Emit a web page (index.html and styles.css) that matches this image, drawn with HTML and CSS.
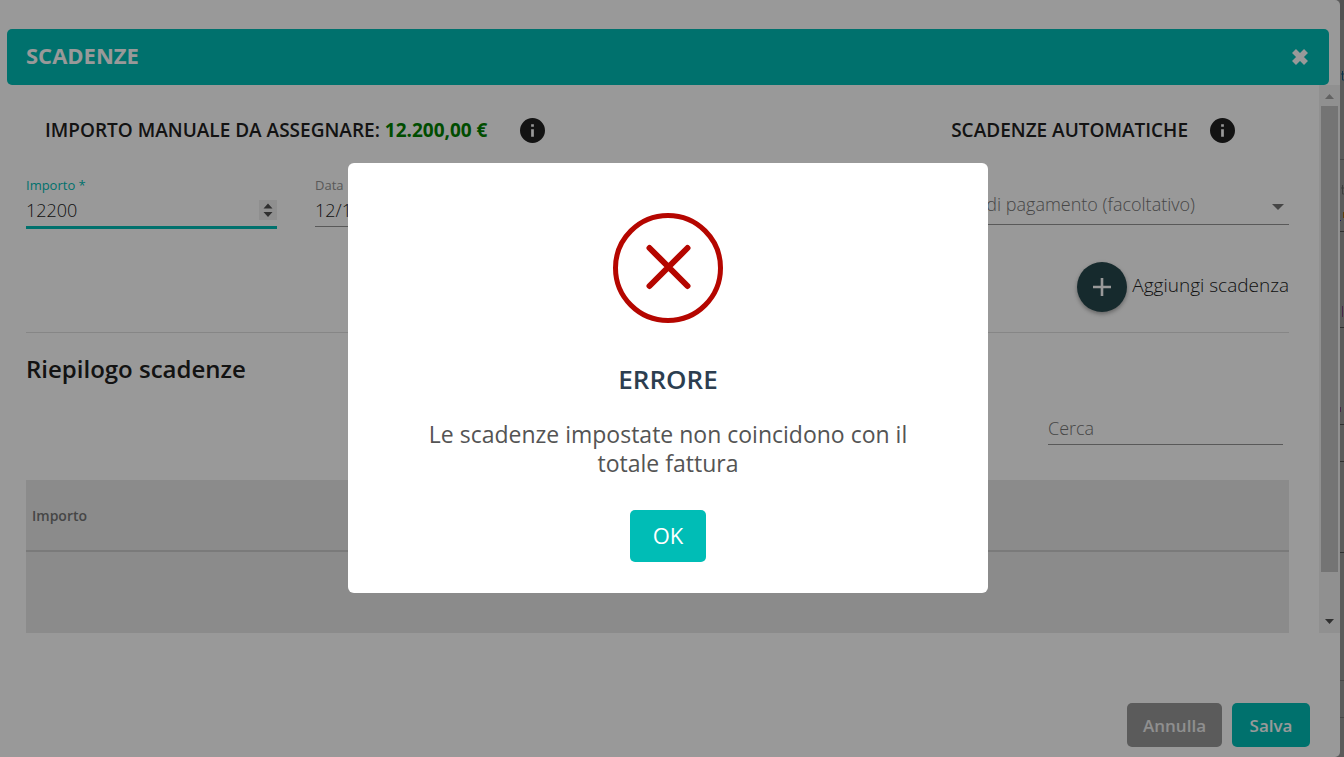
FILE: index.html
```html
<!DOCTYPE html>
<html lang="it">
<head>
<meta charset="utf-8">
<title>Scadenze</title>
<link rel="stylesheet" href="styles.css">
</head>
<body>
<div class="page">
  <main class="dialog">
    <header class="dialog-header">
      <h1 class="dialog-title">SCADENZE</h1>
      <button class="close" type="button" aria-label="Chiudi">
        <svg width="18" height="18" viewBox="0 0 18 18"><path d="M3 3l12 12M15 3L3 15" stroke="currentColor" stroke-width="5.600"/></svg>
      </button>
    </header>
    <div class="scroller">
      <div class="content">
        <div class="headline">
          <h2 class="subtitle manual">IMPORTO MANUALE DA ASSEGNARE: <span class="amount">12.200,00 €</span></h2>
          <svg class="info" viewBox="0 0 24 24"><path fill="currentColor" d="M12 0a12 12 0 100 24 12 12 0 000-24zm1.3 18h-2.6v-7.3h2.6zm0-9.5h-2.6V6h2.6z"/></svg>
          <h2 class="subtitle auto">SCADENZE AUTOMATICHE</h2>
          <svg class="info" viewBox="0 0 24 24"><path fill="currentColor" d="M12 0a12 12 0 100 24 12 12 0 000-24zm1.3 18h-2.6v-7.3h2.6zm0-9.5h-2.6V6h2.6z"/></svg>
        </div>
        <div class="fields">
          <div class="field focused">
            <label for="importo">Importo *</label>
            <div class="control">
              <input id="importo" type="number" value="12200">
              <svg class="spinner" width="18" height="20" viewBox="0 0 18 20"><path fill="#505050" d="M4.500 8.500L9 3.500l4.500 5zM4.500 12L9 17l4.500-5z"/></svg>
            </div>
          </div>
          <div class="field">
            <label for="data">Data</label>
            <div class="control"><input id="data" type="text" value="12/1"></div>
          </div>
          <div class="field select-field">
            <select id="pagamento" aria-label="Pagamento"><option>di pagamento (facoltativo)</option></select>
            <svg class="caret" width="12" height="6" viewBox="0 0 12 6"><path fill="#757575" d="M0 0h12L6 6z"/></svg>
          </div>
        </div>
        <div class="add-row">
          <button class="fab" id="add" type="button" aria-label="Aggiungi">
            <svg width="18" height="18" viewBox="0 0 18 18"><path d="M9 0v18M0 9h18" stroke="currentColor" stroke-width="2.600"/></svg>
          </button>
          <label for="add">Aggiungi scadenza</label>
        </div>
        <h2 class="summary-title">Riepilogo scadenze</h2>
        <input class="search" type="text" placeholder="Cerca" aria-label="Cerca">
        <table class="summary">
          <thead><tr><th scope="col">Importo</th></tr></thead>
          <tbody><tr><td></td></tr></tbody>
        </table>
      </div>
      <div class="scrollbar">
        <svg width="9" height="5" viewBox="0 0 9 5"><path fill="#a3a3a3" d="M0 5h9L4.500 0z"/></svg>
        <div class="thumb"></div>
        <svg width="9" height="5" viewBox="0 0 9 5"><path fill="#505050" d="M0 0h9L4.500 5z"/></svg>
      </div>
    </div>
    <footer class="actions">
      <button class="btn cancel" type="button">Annulla</button>
      <button class="btn save" type="button">Salva</button>
    </footer>
  </main>
  <svg class="behind" viewBox="0 0 4 757" preserveAspectRatio="none">
    <path fill="#888" d="M0 0h4v20H0z"/>
    <path fill="#777" d="M0 159h4v1H0zM0 680h4v1H0zM0 717h4v1H0z"/>
    <path fill="#505050" d="M0 231h4v1H0zM0 327h4v1H0zM0 424h4v1H0zM0 461h4v1H0zM0 552h4v1H0z"/>
    <path fill="none" stroke="#17567c" d="M2.500 71v9h1.500M1 74h3"/>
    <path fill="none" stroke="#666" d="M2.500 185v9h1.500M1 188h3"/>
    <path fill="#9a6610" d="M3 212h1v6H3z"/>
    <path fill="#252593" d="M0 220h1v1H0z"/>
    <path fill="#784378" d="M2 306h1v11H2zM0 407h1v5H0z"/>
  </svg>
</div>
<div class="overlay">
  <section class="alert" role="alertdialog" aria-labelledby="alert-title" aria-describedby="alert-text">
    <svg class="alert-icon" viewBox="0 0 110 110"><circle cx="55" cy="55" r="52.500"/><path d="M36.500 35l38 38M74.500 35l-38 38" stroke-linecap="round"/></svg>
    <h2 class="alert-title" id="alert-title">ERRORE</h2>
    <p class="alert-text" id="alert-text">Le scadenze impostate non coincidono con il totale fattura</p>
    <button class="btn ok" type="button">OK</button>
  </section>
</div>
</body>
</html>
```
FILE: styles.css
```css
* { box-sizing: border-box; }
body {
  margin: 0;
  background: #989898;
  color: #212121;
  font-family: "Open Sans", "Noto Sans", sans-serif;
  font-size: 19px;
  font-weight: 300;
}
h1, h2, p { margin: 0; }
button, input, select { font: inherit; color: inherit; }
button { border: 0; padding: 0; cursor: pointer; }
input, select { border: 0; padding: 0; background: transparent; outline: 0; min-width: 0; font-size: 18px; }

.page { display: flex; min-height: 100vh; padding-bottom: 1px; }
.dialog {
  flex: 1;
  min-width: 0;
  padding-top: 29px;
  background: #fff;
  border-radius: 0 5px 5px 0;
}
.behind { width: 4px; }

.dialog-header {
  display: flex;
  justify-content: space-between;
  align-items: center;
  height: 56px;
  margin: 0 11px 0 7px;
  padding: 0 20px 0 19px;
  background: #00bdb6;
  border-radius: 5px;
  color: #fff;
}
.dialog-title { font-size: 22px; font-weight: 700; line-height: 30px; padding-bottom: 4px; }
.close { display: flex; background: transparent; }

.scroller { display: flex; height: 548px; }
.content { flex: 1; min-width: 0; padding: 0 30px 0 26px; }
.headline {
  display: flex;
  align-items: center;
  gap: 22px;
  height: 90px;
  padding: 0 54px 0 19px;
}
.subtitle { font-size: 19px; font-weight: 600; line-height: 26px; white-space: nowrap; }
.manual { margin-right: 11px; }
.amount { color: #008000; font-weight: 700; }
.auto { margin-left: auto; }
.info { width: 25px; height: 25px; flex: none; }

.fields { display: flex; gap: 38px; height: 54px; }
.field { width: 251px; border-bottom: 1px solid #949494; height: 52px; }
.field label { display: block; color: #949494; font-size: 13px; font-weight: 400; line-height: 20px; }
.control { display: flex; align-items: center; height: 30px; }
.control input { flex: 1; line-height: 24px; }
.field.focused { border-bottom: 3px solid #00bdb6; height: 54px; }
.field.focused label { color: #00bdb6; }
input[type="number"] { appearance: textfield; -moz-appearance: textfield; }
input[type="number"]::-webkit-inner-spin-button { appearance: none; margin: 0; }
.spinner { background: #efefef; }
.select-field {
  display: flex;
  align-items: center;
  flex: 1;
  margin-left: 100px;
  padding: 8px 5px 0 0;
  height: 50px;
}
.select-field select {
  flex: 1;
  height: 30px;
  padding-right: 77px;
  appearance: none;
  color: #757575;
  text-align-last: right;
}
.caret { margin-top: 6px; }

.add-row {
  display: flex;
  justify-content: flex-end;
  align-items: center;
  gap: 5px;
  height: 104px;
  padding-top: 12px;
  border-bottom: 1px solid #e0e0e0;
}
.fab {
  display: grid;
  place-items: center;
  width: 50px;
  height: 50px;
  border-radius: 50%;
  background: #26474c;
  color: #fff;
  box-shadow: 0 2px 4px rgba(0, 0, 0, .35);
}
.add-row label { padding-bottom: 3px; }

.summary-title { padding-top: 20px; font-size: 24px; font-weight: 600; line-height: 32px; }
.search {
  display: block;
  width: 235px;
  height: 33px;
  margin: 27px 6px 35px auto;
  border-bottom: 1px solid #949494;
}
.search::placeholder { color: #757575; opacity: 1; }
.summary { width: 100%; border-collapse: collapse; background: #e8e8e8; }
.summary th {
  height: 71px;
  padding: 0 6px;
  border-bottom: 2px solid #ccc;
  color: #757575;
  font-size: 14px;
  font-weight: 600;
  text-align: left;
}
.summary td { height: 82px; padding: 0; }

.scrollbar {
  display: flex;
  flex-direction: column;
  align-items: center;
  width: 21px;
  padding: 9px 2px;
  background: #f1f1f1;
}
.thumb { width: 17px; flex: none; height: 88%; margin: 7px 0 auto; background: #c1c1c1; }

.actions { display: flex; justify-content: flex-end; gap: 10px; padding: 70px 30px 9px; }
.btn { border-radius: 5px; color: #fff; background: #00bdb6; }
.actions .btn { min-width: 78px; height: 44px; padding: 0 16px; font-size: 17px; font-weight: 600; }
.actions .cancel { background: #989898; color: #eee; }

.overlay {
  position: fixed;
  inset: 0;
  display: flex;
  align-items: center;
  justify-content: center;
  padding: 0 8px 2px 0;
  background: rgba(0, 0, 0, .4);
}
.alert {
  display: flex;
  flex-direction: column;
  align-items: center;
  width: 640px;
  padding: 50px 60px 31px;
  background: #fff;
  border-radius: 6px;
}
.alert-icon { width: 110px; height: 110px; fill: none; stroke: #b50600; stroke-width: 5; }
.alert-icon path { stroke-width: 6; }
.alert-title { margin-top: 39px; color: #2c3e50; font-size: 26px; font-weight: 600; line-height: 34px; }
.alert-text { margin-top: 24px; color: #545454; font-size: 23px; font-weight: 400; line-height: 29px; text-align: center; }
.ok { width: 76px; height: 52px; padding-bottom: 2px; margin-top: 32px; font-size: 22px; font-weight: 400; }
```
